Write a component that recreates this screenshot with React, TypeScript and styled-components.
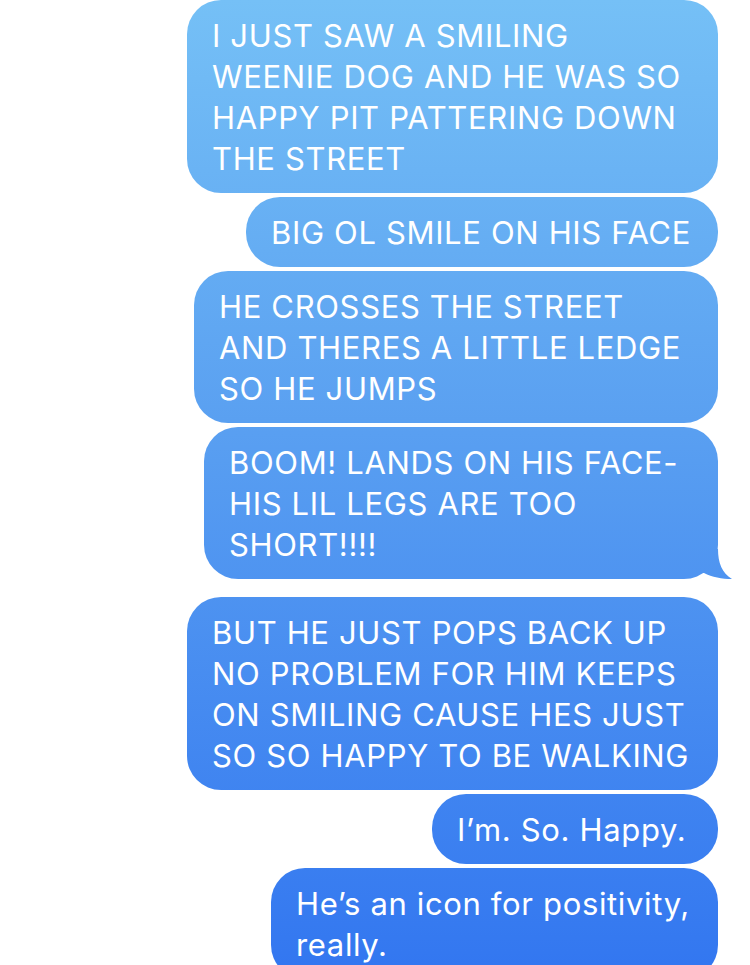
import React from "react";
import styled, { createGlobalStyle } from "styled-components";

const Global = createGlobalStyle`
  html, body { margin: 0; padding: 0; background: #ffffff; }
  body { width: 750px; height: 965px; overflow: hidden; }
`;

const blueFill = `linear-gradient(180deg, #75c0f6 0px, #5aa0f1 420px, #3377f0 965px) fixed`;

const Thread = styled.div`
  display: flex;
  flex-direction: column;
  align-items: flex-end;
  gap: 4px;
  padding: 0 32px 0 0;
  width: 750px;
  box-sizing: border-box;
`;

const Bubble = styled.div<{ $w: number; $after?: number }>`
  position: relative;
  box-sizing: border-box;
  width: ${(p) => p.$w}px;
  padding: 15px 25px 14px 25px;
  margin-bottom: ${(p) => p.$after ?? 0}px;
  border-radius: 34px;
  color: #ffffff;
  font-family: Inter, "Liberation Sans", sans-serif;
  font-size: 31px;
  line-height: 41px;
  letter-spacing: 0.65px;
  background: ${blueFill};
`;

const Line = styled.div`
  white-space: nowrap;
`;

const Tail = styled.span`
  position: absolute;
  right: -18px;
  bottom: 0;
  width: 40px;
  height: 30px;
  background: ${blueFill};
  clip-path: path("M0 0 L22 0 C22 14 26 24 36 30 C26 30 16 28 8 24 L0 24 Z");
`;

type Msg = { w: number; lines: string[]; tail?: boolean; after?: number };

const messages: Msg[] = [
  { w: 531, lines: ["I JUST SAW A SMILING", "WEENIE DOG AND HE WAS SO", "HAPPY PIT PATTERING DOWN", "THE STREET"] },
  { w: 472, lines: ["BIG OL SMILE ON HIS FACE"] },
  { w: 524, lines: ["HE CROSSES THE STREET", "AND THERES A LITTLE LEDGE", "SO HE JUMPS"] },
  { w: 514, lines: ["BOOM! LANDS ON HIS FACE-", "HIS LIL LEGS ARE TOO", "SHORT!!!!"], tail: true, after: 14 },
  { w: 531, lines: ["BUT HE JUST POPS BACK UP", "NO PROBLEM FOR HIM KEEPS", "ON SMILING CAUSE HES JUST", "SO SO HAPPY TO BE WALKING"] },
  { w: 286, lines: ["I\u2019m. So. Happy."] },
  { w: 447, lines: ["He\u2019s an icon for positivity,", "really."] },
];

export default function App() {
  return (
    <>
      <Global />
      <Thread>
        {messages.map((m, i) => (
          <Bubble key={i} $w={m.w} $after={m.after}>
            {m.lines.map((l, j) => (
              <Line key={j}>{l}</Line>
            ))}
            {m.tail && <Tail />}
          </Bubble>
        ))}
      </Thread>
    </>
  );
}
